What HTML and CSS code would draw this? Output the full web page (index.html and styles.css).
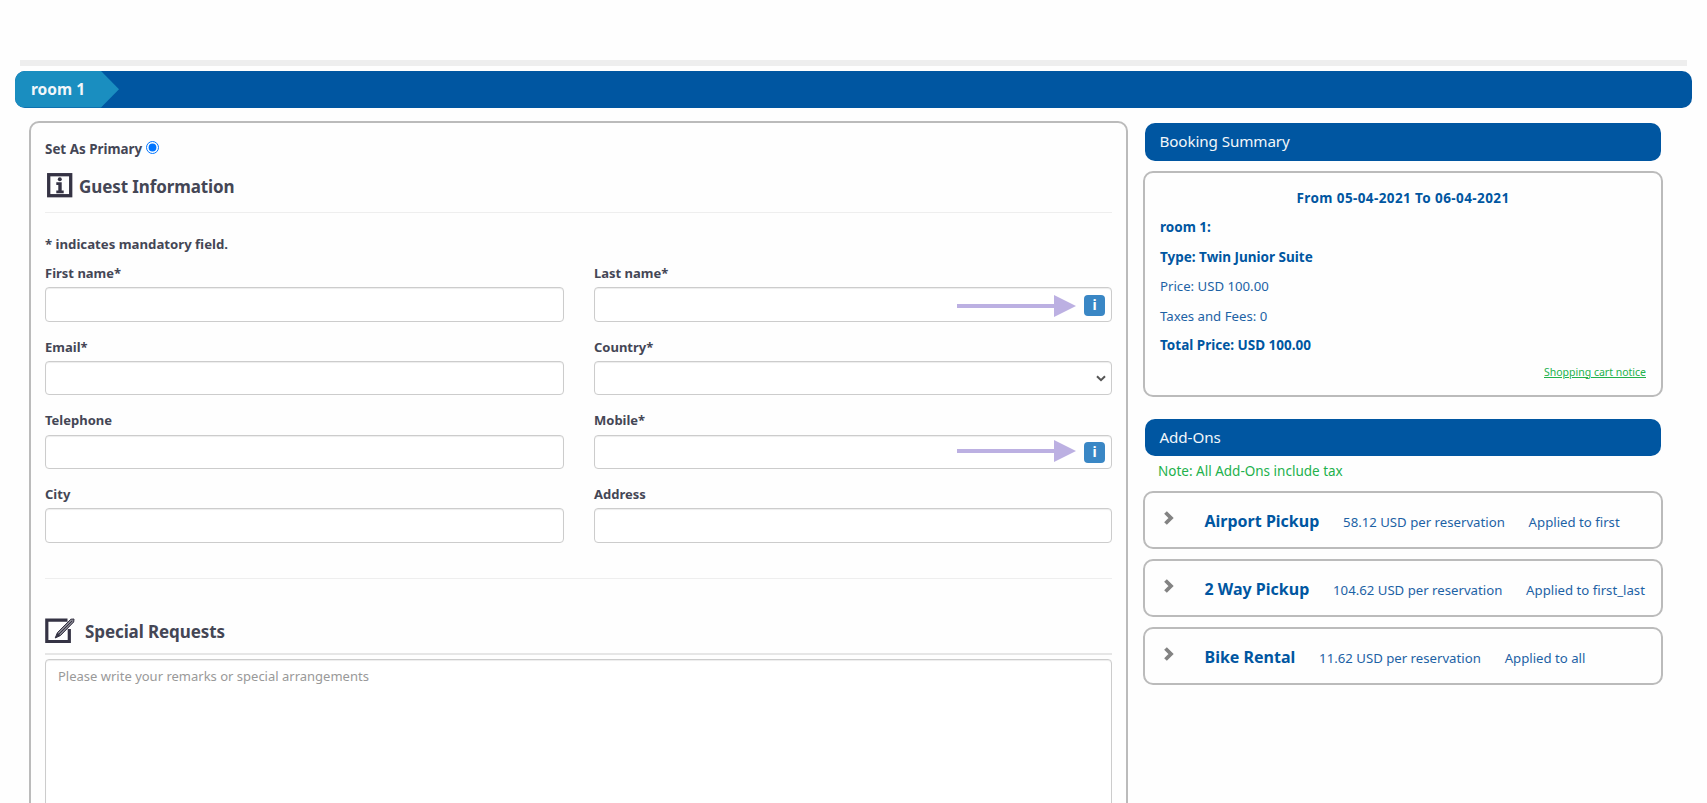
FILE: index.html
```html
<!DOCTYPE html>
<html lang="en">
<head>
    <meta charset="UTF-8">
    <meta name="viewport" content="width=device-width, initial-scale=1.0">
    <title>Booking</title>
    <link rel="stylesheet" href="styles.css">
</head>
<body>
    <div class="top-line"></div>
    <div class="room-bar">
        <div class="room-tab">room 1</div>
    </div>

    <div class="content">
        <form class="guest-form">
            <div class="primary">
                <label for="primary">Set As Primary</label>
                <input type="radio" id="primary" checked>
            </div>

            <h2 class="section-title">
                <svg class="icon-info" width="26" height="25" viewBox="0 0 26 25">
                    <rect x="1.7" y="1.7" width="22" height="21" fill="none" stroke="#353344" stroke-width="3.300"/>
                    <circle cx="12.800" cy="6.200" r="2" fill="#353344"/>
                    <path d="M9.300 9.300h5.400v8.200h2v2.700H9.300v-2.700h2v-5.500h-2z" fill="#353344"/>
                </svg>
                <span>Guest Information</span>
            </h2>
            <hr class="line">

            <p class="mandatory">* indicates mandatory field.</p>

            <div class="fields">
                <div class="field">
                    <label for="first">First name*</label>
                    <input type="text" id="first">
                </div>
                <div class="field">
                    <label for="last">Last name*</label>
                    <input type="text" id="last">
                    <svg class="arrow" width="119" height="22" viewBox="0 0 119 22">
                        <path d="M0 9h97V0l22 11-22 11v-9H0z" fill="#bcb0e2"/>
                    </svg>
                    <span class="info">i</span>
                </div>
                <div class="field">
                    <label for="email">Email*</label>
                    <input type="text" id="email">
                </div>
                <div class="field">
                    <label for="country">Country*</label>
                    <select id="country"><option></option></select>
                    <svg class="caret" width="10" height="7" viewBox="0 0 10 7">
                        <path d="M1 1.200l4 4 4-4" fill="none" stroke="#555" stroke-width="2"/>
                    </svg>
                </div>
                <div class="field">
                    <label for="tel">Telephone</label>
                    <input type="text" id="tel">
                </div>
                <div class="field">
                    <label for="mobile">Mobile*</label>
                    <input type="text" id="mobile">
                    <svg class="arrow arrow-mobile" width="119" height="22" viewBox="0 0 119 22">
                        <path d="M0 9h97V0l22 11-22 11v-9H0z" fill="#bcb0e2"/>
                    </svg>
                    <span class="info">i</span>
                </div>
                <div class="field">
                    <label for="city">City</label>
                    <input type="text" id="city">
                </div>
                <div class="field">
                    <label for="address">Address</label>
                    <input type="text" id="address">
                </div>
            </div>
            <hr class="line line-fields">

            <h2 class="section-title requests">
                <svg width="30" height="26" viewBox="0 0 30 26">
                    <path d="M22.500 2.200H1.800v21.300h22.500V11" fill="none" stroke="#353344" stroke-width="3.200"/>
                    <path d="M10.200 20l2.300-5.500L25.800 1.200l3.200-.2-.3 3L15.500 17.500z" fill="#85848e" stroke="#353344" stroke-width="1"/>
                    <path d="M10.200 20l2.300-5.500 3 3z" fill="#353344"/>
                    <path d="M14 16L27 3" stroke="#353344" stroke-width="1"/>
                </svg>
                <span>Special Requests</span>
            </h2>
            <hr class="line line-thick">
            <textarea class="remarks" placeholder="Please write your remarks or special arrangements"></textarea>
        </form>

        <div class="sidebar">
            <h3 class="side-title">Booking Summary</h3>
            <div class="box summary">
                <p class="dates"><b>From 05-04-2021 To 06-04-2021</b></p>
                <p><b>room 1:</b></p>
                <p><b>Type: Twin Junior Suite</b></p>
                <p>Price: USD 100.00</p>
                <p>Taxes and Fees: 0</p>
                <p><b>Total Price: USD 100.00</b></p>
                <a class="notice" href="#">Shopping cart notice</a>
            </div>

            <h3 class="side-title">Add-Ons</h3>
            <p class="note">Note: All Add-Ons include tax</p>
            <div class="box addon">
                <svg class="chevron" width="10" height="14" viewBox="0 0 10 14">
                    <path d="M1.500 1.500L7 7l-5.500 5.500" fill="none" stroke="#838383" stroke-width="3.800"/>
                </svg>
                <b>Airport Pickup</b>
                <span>58.12 USD per reservation</span>
                <span>Applied to first</span>
            </div>
            <div class="box addon">
                <svg class="chevron" width="10" height="14" viewBox="0 0 10 14">
                    <path d="M1.500 1.500L7 7l-5.500 5.500" fill="none" stroke="#838383" stroke-width="3.800"/>
                </svg>
                <b>2 Way Pickup</b>
                <span>104.62 USD per reservation</span>
                <span>Applied to first_last</span>
            </div>
            <div class="box addon">
                <svg class="chevron" width="10" height="14" viewBox="0 0 10 14">
                    <path d="M1.500 1.500L7 7l-5.500 5.500" fill="none" stroke="#838383" stroke-width="3.800"/>
                </svg>
                <b>Bike Rental</b>
                <span>11.62 USD per reservation</span>
                <span>Applied to all</span>
            </div>
        </div>
    </div>
</body>
</html>
```
FILE: styles.css
```css
* {
    box-sizing: border-box;
}

body {
    margin: 0;
    padding: 60px 15px 0;
    height: 803px;
    overflow: hidden;
    font-family: "Noto Sans", "Open Sans", sans-serif;
    font-size: 13.2px;
    color: #444655;
    background-color: #fefefe;
}

.top-line {
    height: 6px;
    margin: 0 5px 5px;
    background-color: #eee;
}

.room-bar {
    height: 36.5px;
    border-radius: 10px;
    overflow: hidden;
    background-color: #0056a1;
}

.room-tab {
    width: 104px;
    height: 100%;
    padding-left: 16px;
    line-height: 37px;
    font-size: 15.5px;
    font-weight: bold;
    color: #f2f6fa;
    background-color: #1a8ec0;
    clip-path: polygon(0 0, 86px 0, 100% 50%, 86px 100%, 0 100%);
}

.content {
    display: flex;
    align-items: flex-start;
    padding: 13.5px 29px 0 14px;
}

.guest-form {
    width: 1099px;
    height: 720px;
    padding: 16px 14px 0;
    border: 2px solid #bbb;
    border-radius: 10px;
}

.primary {
    display: flex;
    align-items: center;
    height: 20px;
    font-size: 13.4px;
    font-weight: bold;
}

.primary input {
    width: 13px;
    height: 13px;
    margin: 0 0 4px 4px;
    accent-color: #0075ff;
}

.section-title {
    display: flex;
    align-items: center;
    height: 26px;
    margin: 14px 0 0;
    font-size: 17px;
    letter-spacing: -0.1px;
}

.icon-info {
    margin: 0 6px 2px 2px;
}

.line {
    height: 1px;
    margin: 13px 0 0;
    border: 0;
    background-color: #eee;
}

.mandatory {
    margin: 21px 0 0;
    line-height: 20px;
    font-weight: bold;
}

.fields {
    display: grid;
    grid-template-columns: 519px 518px;
    column-gap: 30px;
    margin-top: 9px;
}

.field {
    position: relative;
    height: 73.6px;
}

.field label {
    display: block;
    height: 24.4px;
    line-height: 21px;
    font-weight: bold;
    font-size: 13px;
}

.field input,
.field select {
    display: block;
    width: 100%;
    height: 34.5px;
    border: 1px solid #ccc;
    border-radius: 4px;
    box-shadow: inset 0 1px 1px rgba(0, 0, 0, .075);
    background-color: #fff;
    appearance: none;
}

/* hint icon and pointer lie over the input */
.info {
    position: absolute;
    right: 7px;
    top: 31.5px;
    width: 21px;
    height: 21px;
    border-radius: 4px;
    line-height: 20px;
    text-align: center;
    font-size: 14px;
    font-weight: bold;
    color: #fff;
    background-color: #3a87c5;
}

.arrow {
    position: absolute;
    right: 36px;
    top: 32px;
}

.arrow-mobile {
    top: 30px;
}

.caret {
    position: absolute;
    right: 6px;
    top: 38px;
}

.line-fields {
    margin-top: 21px;
}

.requests {
    margin-top: 39px;
}

.requests svg {
    margin-right: 10px;
}

.line-thick {
    height: 2px;
    margin-top: 9px;
    background-color: #e6e6e6;
}

.remarks {
    display: block;
    width: 100%;
    height: 200px;
    margin-top: 4px;
    padding: 7px 12px;
    border: 1px solid #ccc;
    border-radius: 4px;
    box-shadow: inset 0 1px 1px rgba(0, 0, 0, .075);
    font: inherit;
    font-size: 13px;
    resize: none;
}

.remarks::placeholder {
    color: #999;
}

.sidebar {
    width: 520px;
    margin-left: 15px;
    padding-top: 2px;
    color: #1d62a5;
}

.side-title {
    height: 37.5px;
    margin: 0 2.5px 10px 1.5px;
    padding-left: 15px;
    border-radius: 10px;
    line-height: 36px;
    font-size: 15.2px;
    font-weight: normal;
    letter-spacing: -0.1px;
    color: #f2f6fa;
    background-color: #0056a1;
}

.box {
    border: 2px solid #bbb;
    border-radius: 10px;
}

.summary {
    display: flex;
    flex-direction: column;
    height: 226.5px;
    margin-bottom: 21.5px;
    padding: 11px 15px 0;
}

.summary p {
    margin: 0;
    line-height: 29.5px;
}

.summary .dates {
    text-align: center;
    letter-spacing: 0.4px;
}

.sidebar b {
    color: #0056a1;
}

.summary b {
    font-size: 13.5px;
}

.notice {
    align-self: flex-end;
    margin-top: 4px;
    font-size: 10.5px;
    color: #22b14c;
}

.note {
    margin: -6px 0 9px 15px;
    line-height: 22px;
    font-size: 13.5px;
    color: #22b14c;
}

.addon {
    display: flex;
    align-items: baseline;
    height: 57.5px;
    margin-bottom: 10.5px;
    padding: 16.5px 0 0 19px;
    white-space: nowrap;
}

.addon b {
    margin-left: 30.5px;
    font-size: 16px;
}

.addon span {
    margin-left: 23.8px;
}

.chevron {
    align-self: flex-start;
    margin-top: 1px;
}
```
